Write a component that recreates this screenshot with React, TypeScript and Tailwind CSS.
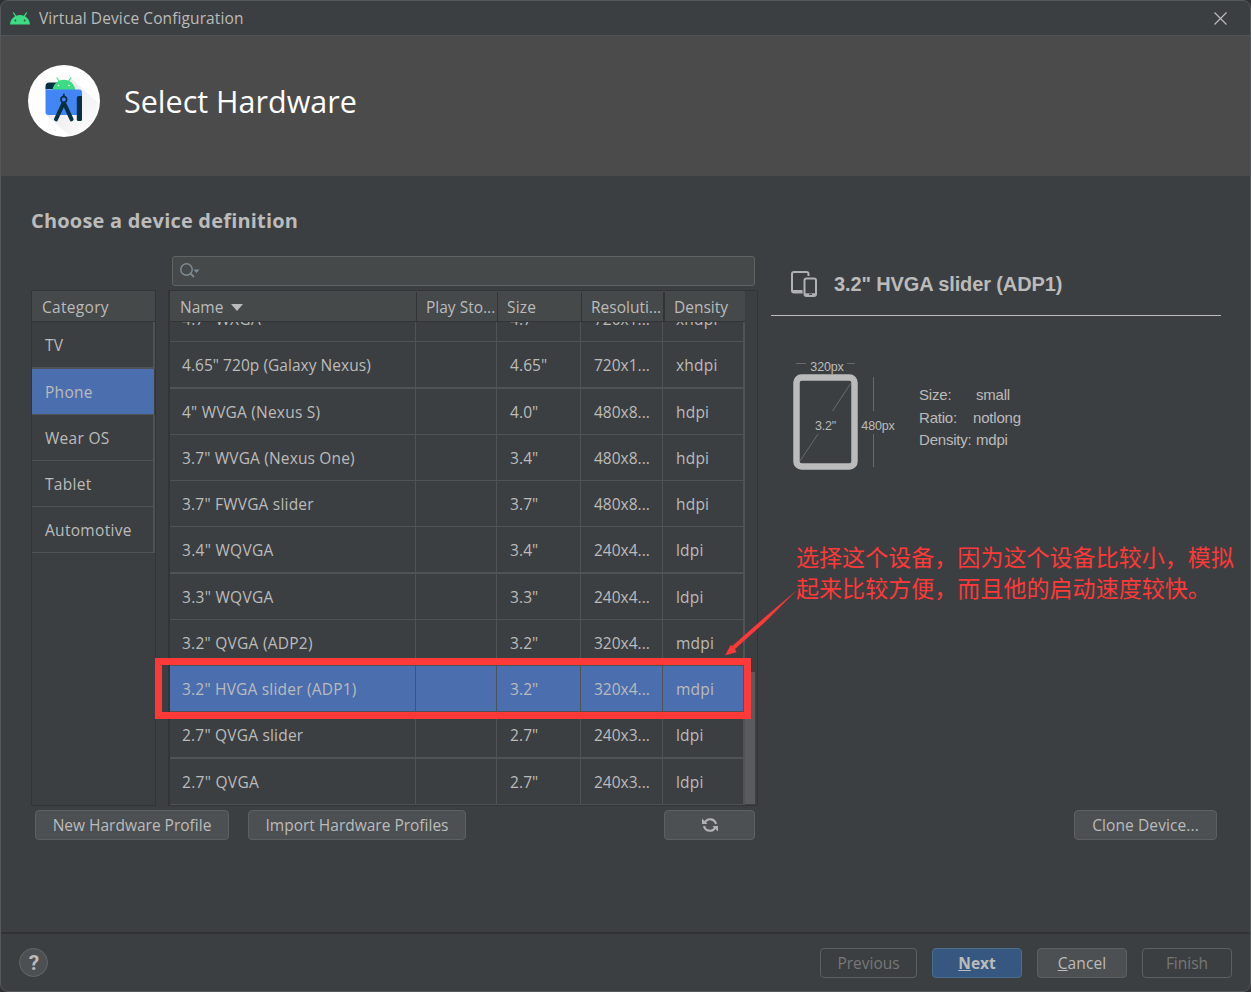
import React from "react";

type Device = { name: string; size: string; res: string; density: string; h: string; selected?: boolean };

const devices: Device[] = [
  { name: '4.65" 720p (Galaxy Nexus)', size: '4.65"', res: "720x1...", density: "xhdpi", h: "h-[47px] border-b-2 tracking-[0.04px]" },
  { name: '4" WVGA (Nexus S)', size: '4.0"', res: "480x8...", density: "hdpi", h: "h-[46px] border-b tracking-[0.2px]" },
  { name: '3.7" WVGA (Nexus One)', size: '3.4"', res: "480x8...", density: "hdpi", h: "h-[46px] border-b tracking-[0.16px]" },
  { name: '3.7" FWVGA slider', size: '3.7"', res: "480x8...", density: "hdpi", h: "h-[46px] border-b tracking-[0.2px]" },
  { name: '3.4" WQVGA', size: '3.4"', res: "240x4...", density: "ldpi", h: "h-[47px] border-b-2 tracking-[0.3px]" },
  { name: '3.3" WQVGA', size: '3.3"', res: "240x4...", density: "ldpi", h: "h-[46px] border-b tracking-[0.3px]" },
  { name: '3.2" QVGA (ADP2)', size: '3.2"', res: "320x4...", density: "mdpi", h: "h-[46px] border-b tracking-[0.25px]" },
  { name: '3.2" HVGA slider (ADP1)', size: '3.2"', res: "320x4...", density: "mdpi", h: "h-[46px] border-b tracking-[0.2px]", selected: true },
  { name: '2.7" QVGA slider', size: '2.7"', res: "240x3...", density: "ldpi", h: "h-[47px] border-b-2 tracking-[0.2px]" },
  { name: '2.7" QVGA', size: '2.7"', res: "240x3...", density: "ldpi", h: "h-[46px] border-b tracking-[0.3px]" },
];

const categories = [
  { name: "TV", h: "h-[47px] border-b-2 pt-[3px]" },
  { name: "Phone", h: "h-[46px] border-b pt-[2px]", selected: true },
  { name: "Wear OS", h: "h-[46px] border-b pt-[2px]" },
  { name: "Tablet", h: "h-[46px] border-b pt-[2px]" },
  { name: "Automotive", h: "h-[46px] border-b pt-[2px]" },
];

function DeviceRow({ d }: { d: Device }) {
  return (
    <div className={`flex shrink-0 border-[#505355] ${d.h} ${d.selected ? "bg-[#4b6eaf]" : ""}`}>
      <div className="flex w-[246px] items-center border-r border-[#505355] pt-[2px] pl-3">{d.name}</div>
      <div className="w-[81px] border-r border-[#505355]" />
      <div className="flex w-[84px] items-center border-r border-[#505355] pt-[2px] pl-[13px] tracking-[0.1px]">{d.size}</div>
      <div className="flex w-[82px] items-center border-r border-[#505355] pt-[2px] pl-[13px] tracking-normal">{d.res}</div>
      <div className="flex w-[82px] items-center border-r-2 border-[#505355] pt-[2px] pl-[13px] tracking-[0.2px]">{d.density}</div>
    </div>
  );
}

function Button({ children, className }: { children: React.ReactNode; className: string }) {
  return (
    <button className={`flex shrink-0 items-center justify-center rounded-[4px] border-[1.5px] whitespace-nowrap ${className}`}>
      {children}
    </button>
  );
}

function AndroidHead({ className }: { className: string }) {
  return (
    <svg className={className} viewBox="0 0 20 13">
      <path d="M0 12.5C.3 8.7 2.2 5.9 5 4.3L2.800.800 3.900.200l2.200 3.500a10.300 10.300 0 0 1 7.800 0L16.100.200l1.100.600-2.200 3.500c2.800 1.600 4.700 4.400 5 8.200z" fill="#3ddc84" />
      <circle cx="5.400" cy="8.500" r=".9" fill="#31543f" />
      <circle cx="14.600" cy="8.500" r=".9" fill="#31543f" />
    </svg>
  );
}

function StudioLogo() {
  return (
    <svg className="h-[72px] w-[72px] shrink-0" viewBox="0 0 72 72">
      <defs>
        <linearGradient id="shade" x1="0" y1="0" x2="1" y2="1">
          <stop offset="0" stopColor="#cfcfcf" />
          <stop offset="1" stopColor="#ffffff" />
        </linearGradient>
      </defs>
      <circle cx="36" cy="36" r="36" fill="#fff" />
      <path d="M43 13 70 38A36 36 0 0 1 42 71L18 50z" fill="url(#shade)" opacity=".6" />
      <path d="M17.500 24v-2.500a4 4 0 0 1 4-4H30v7z" fill="#073042" />
      <path d="M24.500 25C25 20.500 27.500 17.500 30.500 16l-2.200-3.200.9-.6 2.200 3.300a13 13 0 0 1 9 0l2.200-3.300.9.6-2.200 3.200c3.500 1.700 5.500 5 6 9z" fill="#3ddc84" />
      <circle cx="30.500" cy="20.500" r=".8" fill="#fff" />
      <circle cx="41" cy="20.500" r=".8" fill="#fff" />
      <path d="M17.500 22q0 2.500 3 2.500H51q3 0 3 3V50H20.500a3 3 0 0 1-3-3z" fill="#4285f4" />
      <path d="M54 31v23.500q0 1.500-1.500 1.500H50.300q-1.500 0-1.500-1.500V33q0-2 2-2z" fill="#073042" />
      <path d="M35.800 37.500 28 54.300M35.800 37.500 43.600 54.300" stroke="#073042" strokeWidth="4" strokeLinecap="round" />
      <path d="M34 38h3.600l4 8q-2.500-1.500-4-1.500l-1.800-3-1.800 3q-1.500 0-4 1.500z" fill="#073042" />
      <circle cx="35.800" cy="34.500" r="2.800" fill="#4285f4" stroke="#073042" strokeWidth="1.700" />
      <path d="M35.800 28.800v3" stroke="#073042" strokeWidth="1.800" />
    </svg>
  );
}

export default function App() {
  return (
    <div className="bg-[#2f3132]">
      <div className="relative flex h-[992px] w-[1251px] flex-col overflow-hidden rounded-lg border border-[#55585a] bg-[#3c3f41] font-['Open_Sans',sans-serif] text-[15.5px] text-[#bbbbbb]">
        <header className="flex h-[35px] shrink-0 items-center border-b border-[#505355] pl-[9px]">
          <AndroidHead className="h-[13px] w-5" />
          <span className="ml-[9px] pt-[2px] tracking-[0.1px]">Virtual Device Configuration</span>
          <svg className="mr-[23px] ml-auto h-[13px] w-[13px]" viewBox="0 0 13 13">
            <path d="m.5.5 12 12m0-12-12 12" stroke="#bbb" strokeWidth="1.200" />
          </svg>
        </header>

        <section className="flex h-[140px] shrink-0 items-start bg-[#4b4b4b] pt-[29px] pl-[27px]">
          <StudioLogo />
          <h1 className="ml-6 text-[30.5px] leading-[73px] text-white">Select Hardware</h1>
        </section>

        <main className="flex h-[756px] shrink-0 flex-col pt-[30px] pl-[30px]">
          <h2 className="h-[30px] text-[20px] leading-[30px] font-bold tracking-[0.2px]">Choose a device definition</h2>
          <div className="mt-[20px] flex">
            <div className="flex w-[727px] shrink-0 flex-col">
              <div className="ml-[141px] flex h-[30px] w-[583px] items-center rounded-[3px] border-[1.500px] border-[#616363] bg-[#45494a] pl-[6px]">
                <svg className="h-5 w-[22px]" viewBox="0 0 22 20" fill="none">
                  <circle cx="7.500" cy="8.500" r="5.700" stroke="#7f8b91" strokeWidth="1.500" />
                  <path d="m11.500 12.500 3.500 3.500" stroke="#7f8b91" strokeWidth="1.800" />
                  <path d="M14.500 8.500h6l-3 3.500z" fill="#7f8b91" />
                </svg>
              </div>
              <div className="mt-[4px] flex h-[516px]">
                <div className="flex w-[125px] flex-col border border-[#323435]">
                  <div className="flex h-[31px] shrink-0 items-center border-b border-[#323435] bg-[#45494a] pt-[4px] pl-[10px] tracking-[0.3px]">Category</div>
                  {categories.map((c) => (
                    <div key={c.name} className={`flex shrink-0 items-center border-[#505355] pl-[13px] tracking-[0.3px] ${c.h} ${c.selected ? "mr-px bg-[#4b6eaf]" : "border-r-2"}`}>
                      {c.name}
                    </div>
                  ))}
                </div>
                <div className="ml-[12px] flex w-[590px] flex-col border border-l-2 border-[#323435]">
                  <div className="flex h-[31px] shrink-0">
                    <div className="flex w-[575px] border-b border-[#323435] bg-[#45494a] pt-px">
                      <div className="flex w-[247px] items-center border-r border-[#323435] pt-[3px] pl-[10px]">
                        Name
                        <svg className="mt-[-2px] ml-[8px] h-[7px] w-3" viewBox="0 0 12 7">
                          <path d="M0 0h12L6 7z" fill="#bbb" />
                        </svg>
                      </div>
                      <div className="flex w-[81px] items-center border-r border-[#323435] pt-[3px] pl-[9px]">Play Sto...</div>
                      <div className="flex w-[84px] items-center border-r border-[#323435] pt-[3px] pl-[9px] tracking-[0.2px]">Size</div>
                      <div className="flex w-[83px] items-center border-r-2 border-[#323435] pt-[3px] pl-[9px]">Resoluti...</div>
                      <div className="flex items-center pt-[3px] pl-[9px]">Density</div>
                    </div>
                  </div>
                  <div className="flex h-[483px]">
                    <div className="flex w-[575px] shrink-0 flex-col overflow-hidden">
                      <div className="flex h-5 shrink-0 flex-col justify-end overflow-hidden">
                        <DeviceRow d={{ name: '4.7" WXGA', size: '4.7"', res: "720x1...", density: "xhdpi", h: "h-[46px] border-b tracking-[0.3px]" }} />
                      </div>
                      {devices.map((d) => (
                        <DeviceRow key={d.name} d={d} />
                      ))}
                    </div>
                    <div className="mt-auto mb-px h-[132px] w-[10px] bg-[#595b5c]" />
                  </div>
                </div>
              </div>
              <div className="mt-[4px] flex h-[30px] pl-[4px]">
                <Button className="w-[194px] border-[#5e6060] bg-[#4c5052] pt-[2px]">New Hardware Profile</Button>
                <Button className="ml-[19px] w-[218px] border-[#5e6060] bg-[#4c5052] pt-[2px]">Import Hardware Profiles</Button>
                <Button className="ml-[198px] w-[91px] border-[#5e6060] bg-[#4c5052]">
                  <svg className="h-4 w-4" viewBox="0 0 16 16" fill="none">
                    <path d="M2.800 5.500A6 6 0 0 1 14 7M13.200 10.500A6 6 0 0 1 2 9" stroke="#afb1b3" strokeWidth="2.200" />
                    <path d="M0 1.500V7h5.500zM16 14.500V9h-5.500z" fill="#afb1b3" />
                  </svg>
                </Button>
              </div>
            </div>

            <div className="ml-[13px] flex w-[450px] flex-col">
              <div className="flex h-[60px] items-center border-b-[1.500px] border-[#bbbbbb] pl-5">
                <svg className="mt-[-3px] h-[27px] w-[27px]" viewBox="0 0 27 27" fill="none" stroke="#afb1b3" strokeWidth="2">
                  <path d="M17.500 5V3q0-2-2-2H3Q1 1 1 3v16.500q0 2 2 2h8.500" />
                  <path d="M2 20.500h9.500" strokeWidth="3" />
                  <rect x="13.500" y="7.500" width="11.500" height="17.500" rx="2" />
                  <path d="M14 23.500h10.500" strokeWidth="2.500" />
                  <path d="M18 23.300h3" stroke="#3c3f41" strokeWidth="1.200" />
                </svg>
                <span className="mt-[-4px] ml-4 font-['Liberation_Sans',sans-serif] text-[20px] font-bold tracking-[-0.120px]">3.2" HVGA slider (ADP1)</span>
              </div>
              <div className="flex pt-[38px] font-['Liberation_Sans',sans-serif]">
                <svg className="ml-[18px] h-[126px] w-[112px]" viewBox="789 354 112 126" fill="none">
                  <rect x="796.500" y="377.500" width="58" height="89" rx="5" stroke="#bbb" strokeWidth="6.500" />
                  <path d="M796 363.500h10M847 363.500h8M873.500 377v34M873.500 434v33M851 383l-18.500 28M818 434l-18 27" stroke="#68696a" />
                  <g fill="#bbb" fontSize="12.500" textAnchor="middle" letterSpacing="-0.150">
                    <text x="827" y="371">320px</text>
                    <text x="825.500" y="430">3.2"</text>
                    <text x="878" y="430">480px</text>
                  </g>
                </svg>
                <div className="mt-[30px] ml-[18px] text-[15px] leading-[22.700px] tracking-[-0.200px]">
                  <div className="flex"><span className="w-[57px]">Size:</span>small</div>
                  <div className="flex"><span className="w-[54px]">Ratio:</span>notlong</div>
                  <div className="flex"><span className="w-[57px]">Density:</span>mdpi</div>
                </div>
              </div>
              <Button className="mt-auto mr-[4px] h-[30px] w-[143px] self-end border-[#5e6060] bg-[#4c5052] pt-[2px] tracking-[0.1px]">Clone Device...</Button>
            </div>
          </div>
        </main>

        <footer className="flex flex-1 items-start border-t-2 border-[#323232] pt-[14px] pr-[18px] pl-[18px]">
          <div className="flex h-[29px] w-[29px] items-center justify-center rounded-full border border-[#646767] bg-[#4c5052] pt-[2px] pl-px font-['Roboto',sans-serif] text-[21px] font-bold">?</div>
          <div className="ml-auto flex h-[30px] gap-[15px]">
            <Button className="w-[97px] border-[#5e6060] pt-[2px] text-[#777777]">Previous</Button>
            <Button className="w-[90px] border-[#4c708c] bg-[#365880] pt-[2px] font-bold"><span><u>N</u>ext</span></Button>
            <Button className="w-[90px] border-[#5e6060] bg-[#4c5052] pt-[2px] tracking-[0.1px]"><span><u>C</u>ancel</span></Button>
            <Button className="w-[90px] border-[#5e6060] pt-[2px] text-[#777777]">Finish</Button>
          </div>
        </footer>

        <div className="absolute top-[657px] left-[154px] h-[61px] w-[596px] border-[7px] border-[#ff3838]" />
        <svg className="absolute top-[584px] left-[719px] h-[76px] w-[80px]" viewBox="720 585 80 76">
          <path d="M797 590 765 622 735 649l1.500 3.200-11.200 3 5.300-10.200 1.700 1L762.800 619z" fill="#ff3838" />
        </svg>
        <p className="absolute top-[540px] left-[795px] font-['Noto_Sans_CJK_SC',sans-serif] text-[23px] leading-[31px] tracking-[0.050px] whitespace-nowrap text-[#ff3838]">
          选择这个设备，因为这个设备比较小，模拟<br />起来比较方便，而且他的启动速度较快。
        </p>
      </div>
    </div>
  );
}
